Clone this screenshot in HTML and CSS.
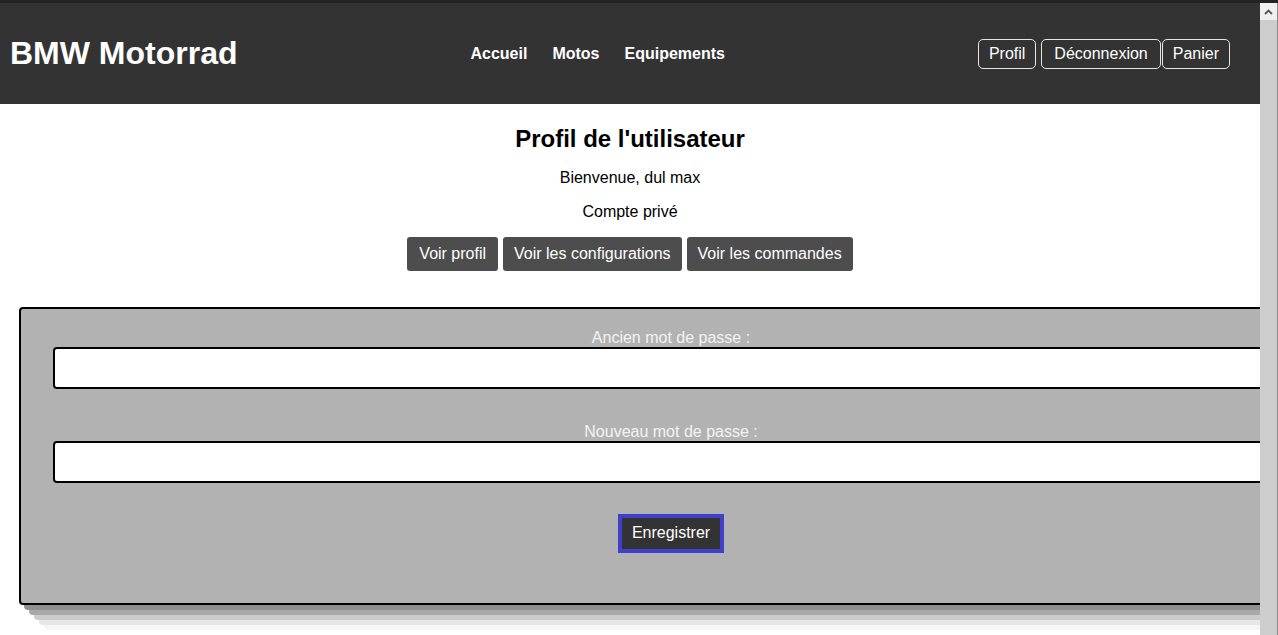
FILE: index.html
```html
<!DOCTYPE html>
<html lang="fr">
<head>
<meta charset="utf-8">
<title>BMW Motorrad - Profil</title>
<link rel="stylesheet" href="styles.css">
</head>
<body>
<div class="window">
  <div class="page">
    <header class="site-header">
      <h1 class="logo">BMW Motorrad</h1>
      <nav class="main-nav">
        <a href="#">Accueil</a>
        <a href="#">Motos</a>
        <a href="#">Equipements</a>
      </nav>
      <div class="user-nav">
        <a href="#" class="outline-btn">Profil</a>
        <a href="#" class="outline-btn deco">Déconnexion</a>
        <a href="#" class="outline-btn panier">Panier</a>
      </div>
    </header>

    <section class="profile">
      <h2 class="profile-title">Profil de l'utilisateur</h2>
      <p class="profile-line">Bienvenue, dul max</p>
      <p class="profile-line">Compte privé</p>
      <div class="tabs">
        <button class="tab-btn first">Voir profil</button>
        <button class="tab-btn">Voir les configurations</button>
        <button class="tab-btn">Voir les commandes</button>
      </div>
    </section>

    <form class="pwd-form">
      <div class="field">
        <label class="field-label">Ancien mot de passe :</label>
        <input class="field-input" type="password">
      </div>
      <div class="field">
        <label class="field-label">Nouveau mot de passe :</label>
        <input class="field-input" type="password">
      </div>
      <div class="actions">
        <button type="button" class="save-btn">Enregistrer</button>
      </div>
    </form>
  </div>
  <div class="scrollbar">
    <div class="sb-up">
      <svg width="9" height="6" viewBox="0 0 9 6"><polyline points="1,5 4.5,1.5 8,5" fill="none" stroke="#555" stroke-width="1.8"/></svg>
    </div>
    <div class="sb-thumb"></div>
  </div>
</div>
</body>
</html>
```

FILE: styles.css
```css
* { box-sizing: border-box; }

html, body {
  margin: 0;
  padding: 0;
}

body {
  height: 635px;
  overflow: hidden;
  border-top: 3px solid #232323;
  font-family: "Liberation Sans", Arial, sans-serif;
  font-size: 16px;
  color: #000;
  background: #fff;
}

.window {
  display: flex;
  height: 632px;
}

.page {
  flex: 1;
  overflow: hidden;
  min-width: 0;
}

/* Header */
.site-header {
  height: 101px;
  background: #333333;
  display: flex;
  align-items: center;
  justify-content: space-between;
  padding: 1px 30px 0 10px;
}

.logo {
  margin: 0 0 1px;
  font-size: 32px;
  font-weight: bold;
  color: #fff;
  white-space: nowrap;
}

.main-nav {
  display: flex;
  gap: 25px;
  margin-right: 20px;
}

.main-nav a {
  color: #fff;
  font-weight: bold;
  text-decoration: none;
}

.user-nav {
  display: flex;
}

.outline-btn {
  color: #fff;
  text-decoration: none;
  border: 1px solid #e6e6e6;
  border-radius: 5px;
  padding: 5px 10px 5px;
  line-height: 18px;
}

.outline-btn.deco { margin-left: 5px; padding-left: 12px; padding-right: 12px; }
.outline-btn.panier { margin-left: 1px; }

/* Profile */
.profile {
  text-align: center;
}

.profile-title {
  margin: 21px 0 16px;
  font-size: 24px;
  font-weight: bold;
}

.profile-line {
  margin: 16px 0;
}

.tabs {
  display: flex;
  justify-content: center;
  gap: 5px;
}

.tab-btn {
  font-family: "Liberation Sans", Arial, sans-serif;
  font-size: 16px;
  color: #fff;
  background: #4d4d4d;
  border: none;
  border-radius: 3px;
  padding: 8px 11px;
  height: 34px;
  line-height: 18px;
}

.tab-btn.first {
  padding: 8px 12px;
}

/* Form */
.pwd-form {
  margin: 36px 0 0 19px;
  width: 1304px;
  background: #b2b2b2;
  border: 2px solid #000;
  border-radius: 4px;
  padding: 20px 32px 50px;
  text-align: center;
  box-shadow:
    5px 5px 0 #8f8f8f,
    10px 10px 0 #a9a9a9,
    15px 15px 0 #cbcbcb,
    20px 20px 0 #e7e7e7,
    25px 25px 0 #f6f6f6;
}

.field {
  margin-bottom: 34px;
}

.field + .field {
  margin-bottom: 31px;
}

.field-label {
  display: block;
  color: #f2f2f2;
  line-height: 18px;
}

.field-input {
  display: block;
  width: 100%;
  height: 42px;
  border: 2px solid #000;
  border-radius: 4px;
  background: #fff;
  font-size: 16px;
}

.actions {
  display: flex;
  justify-content: center;
}

.save-btn {
  font-family: "Liberation Sans", Arial, sans-serif;
  font-size: 16px;
  color: #fff;
  background: #333;
  border: 4px solid #3f3fcc;
  padding: 6px 10px 7px;
  height: 39px;
  line-height: 18px;
}

/* Fake scrollbar */
.scrollbar {
  width: 18px;
  display: flex;
  flex-direction: column;
  border-right: 1px solid #8a8a8a;
}

.sb-up {
  height: 17px;
  background: #f0f0f0;
  display: flex;
  align-items: center;
  justify-content: center;
}

.sb-thumb {
  flex: 1;
  background: #cdcdcd;
}
```
